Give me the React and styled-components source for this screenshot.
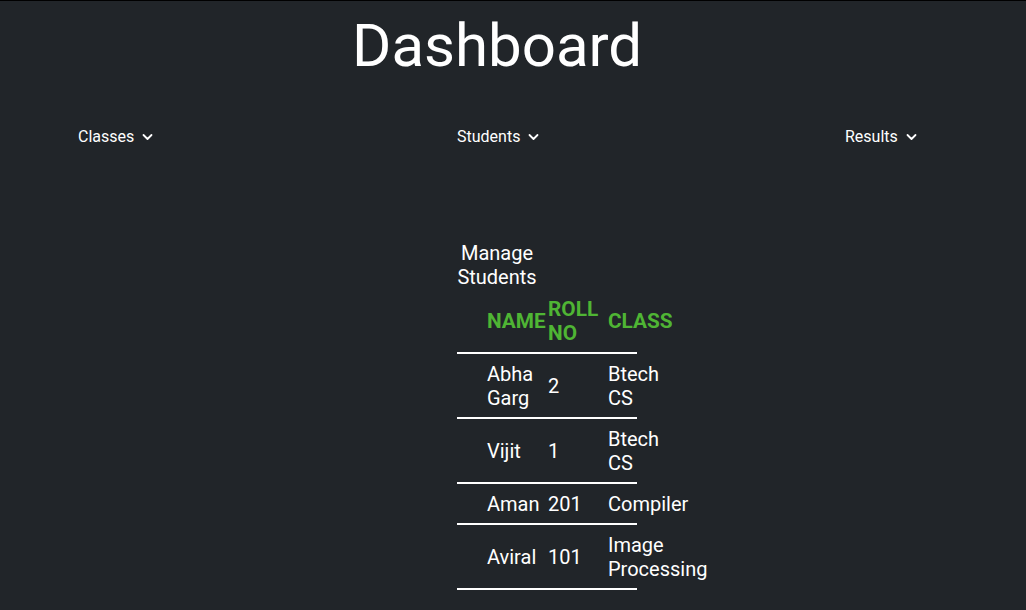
import React from "react";
import styled, { createGlobalStyle } from "styled-components";

const Global = createGlobalStyle`
  html, body { margin: 0; padding: 0; background: #212529; }
  body {
    font-family: Roboto, "Liberation Sans", sans-serif;
    color: #ffffff;
    border-top: 1px solid #000;
    min-height: 609px;
  }
`;

const Page = styled.div`
  display: flex;
  flex-direction: column;
`;

const Title = styled.h1`
  margin: 0;
  padding: 7px 0 0 352px;
  font-size: 60px;
  font-weight: 400;
  line-height: 76px;
`;

const Nav = styled.nav`
  display: grid;
  grid-template-columns: 379px 388px 1fr;
  padding: 43px 0 0 78px;
`;

const NavItem = styled.button`
  justify-self: start;
  display: flex;
  align-items: center;
  gap: 8px;
  background: none;
  border: 0;
  padding: 0;
  color: #fff;
  font-family: inherit;
  font-size: 16px;
  line-height: 20px;
  cursor: pointer;
`;

const Chevron = () => (
  <svg width="11" height="10" viewBox="0 0 11 10" fill="none">
    <polyline points="1.5,3 5.5,7 9.5,3" stroke="#fff" strokeWidth="1.8" strokeLinecap="round" strokeLinejoin="round" />
  </svg>
);

const Section = styled.section`
  margin: 94px 0 0 457px;
  width: 180px;
`;

const Heading = styled.h2`
  margin: 0;
  width: 80px;
  text-align: center;
  font-size: 20px;
  font-weight: 400;
  line-height: 24px;
`;

const Table = styled.table`
  width: 180px;
  table-layout: fixed;
  border-collapse: collapse;
  font-size: 20px;
  line-height: 24px;
`;

const Th = styled.th`
  padding: 8px 0 7px;
  text-align: left;
  vertical-align: middle;
  color: #4fb534;
  font-weight: 700;
  font-size: 20.8px;
  border-bottom: 2px solid #fff;
`;

const Td = styled.td`
  padding: 8px 0 7px;
  vertical-align: middle;
  border-bottom: 2px solid #fff;
`;

const rows = [
  { name: "Abha Garg", roll: "2", cls: "Btech CS" },
  { name: "Vijit", roll: "1", cls: "Btech CS" },
  { name: "Aman", roll: "201", cls: "Compiler" },
  { name: "Aviral", roll: "101", cls: "Image Processing" },
];

export default function App() {
  return (
    <Page>
      <Global />
      <Title>Dashboard</Title>
      <Nav>
        <NavItem>Classes <Chevron /></NavItem>
        <NavItem>Students <Chevron /></NavItem>
        <NavItem>Results <Chevron /></NavItem>
      </Nav>
      <Section>
        <Heading>Manage Students</Heading>
        <Table>
          <colgroup>
            <col style={{ width: 30 }} />
            <col style={{ width: 61 }} />
            <col style={{ width: 60 }} />
            <col style={{ width: 29 }} />
          </colgroup>
          <thead>
            <tr>
              <Th />
              <Th>NAME</Th>
              <Th>ROLL NO</Th>
              <Th>CLASS</Th>
            </tr>
          </thead>
          <tbody>
            {rows.map((r) => (
              <tr key={r.name}>
                <Td />
                <Td>{r.name}</Td>
                <Td>{r.roll}</Td>
                <Td>{r.cls}</Td>
              </tr>
            ))}
          </tbody>
        </Table>
      </Section>
    </Page>
  );
}
